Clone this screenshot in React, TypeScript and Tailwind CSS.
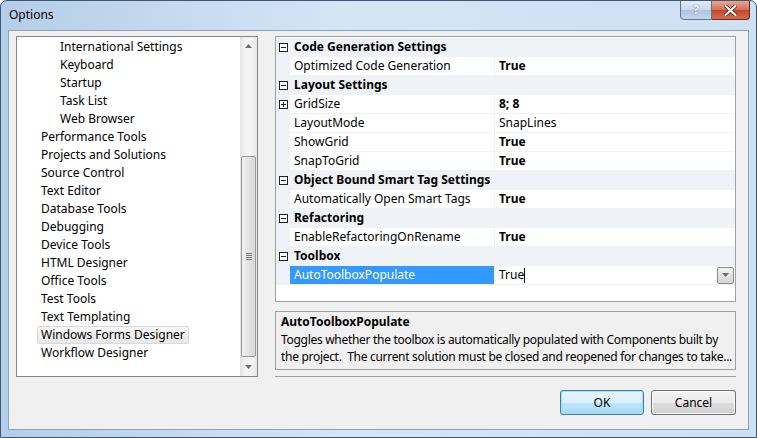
import React from "react";

const treeItems: { label: string; level: number; selected?: boolean }[] = [
  { label: "International Settings", level: 2 },
  { label: "Keyboard", level: 2 },
  { label: "Startup", level: 2 },
  { label: "Task List", level: 2 },
  { label: "Web Browser", level: 2 },
  { label: "Performance Tools", level: 1 },
  { label: "Projects and Solutions", level: 1 },
  { label: "Source Control", level: 1 },
  { label: "Text Editor", level: 1 },
  { label: "Database Tools", level: 1 },
  { label: "Debugging", level: 1 },
  { label: "Device Tools", level: 1 },
  { label: "HTML Designer", level: 1 },
  { label: "Office Tools", level: 1 },
  { label: "Test Tools", level: 1 },
  { label: "Text Templating", level: 1 },
  { label: "Windows Forms Designer", level: 1, selected: true },
  { label: "Workflow Designer", level: 1 },
];

type Row =
  | { kind: "cat"; label: string }
  | { kind: "prop"; name: string; value: string; bold?: boolean; plus?: boolean; selected?: boolean };

const rows: Row[] = [
  { kind: "cat", label: "Code Generation Settings" },
  { kind: "prop", name: "Optimized Code Generation", value: "True", bold: true },
  { kind: "cat", label: "Layout Settings" },
  { kind: "prop", name: "GridSize", value: "8; 8", bold: true, plus: true },
  { kind: "prop", name: "LayoutMode", value: "SnapLines" },
  { kind: "prop", name: "ShowGrid", value: "True", bold: true },
  { kind: "prop", name: "SnapToGrid", value: "True", bold: true },
  { kind: "cat", label: "Object Bound Smart Tag Settings" },
  { kind: "prop", name: "Automatically Open Smart Tags", value: "True", bold: true },
  { kind: "cat", label: "Refactoring" },
  { kind: "prop", name: "EnableRefactoringOnRename", value: "True", bold: true },
  { kind: "cat", label: "Toolbox" },
  { kind: "prop", name: "AutoToolboxPopulate", value: "True", selected: true },
];

function ExpandBox({ plus }: { plus?: boolean }) {
  return (
    <svg width="9" height="9" viewBox="0 0 9 9" className="block">
      <rect x="0.5" y="0.5" width="8" height="8" fill="#fff" stroke="#222" />
      <line x1="2" y1="4.5" x2="7" y2="4.5" stroke="#222" />
      {plus && <line x1="4.5" y1="2" x2="4.5" y2="7" stroke="#222" />}
    </svg>
  );
}

function Tri({ up }: { up?: boolean }) {
  return (
    <svg width="7" height="4" viewBox="0 0 7 4" className="block">
      {up ? <path d="M0 4 L3.5 0 L7 4 Z" fill="#6d6d6d" /> : <path d="M0 0 L7 0 L3.5 4 Z" fill="#6d6d6d" />}
    </svg>
  );
}

export default function App() {
  return (
    <div className="w-[757px] h-[438px] relative overflow-hidden font-['Noto_Sans',sans-serif] text-[12px] text-black bg-[linear-gradient(90deg,#b4cde8_0%,#d6e5f6_45%,#cfe0f3_100%)] rounded-t-[7px] border border-[#3d5877]">
      {/* title bar */}
      <div className="h-[29px] flex items-center pl-[8px] pb-[2px] relative">
        <span className="text-[12px] text-black">Options</span>
        <div className="absolute top-[-1px] right-[6px] flex">
          <div className="w-[32px] h-[20px] border border-[#5c7493] rounded-bl-[4px] bg-[linear-gradient(180deg,#e6eef8_0%,#c6d6ea_50%,#aec3de_51%,#c5d6ec_100%)] flex items-center justify-center text-[12px] font-bold text-[#f3f6fa] [text-shadow:0_0_1px_#3a5068]">
            ?
          </div>
          <div className="w-[38px] h-[20px] border border-l-0 border-[#6b2a22] rounded-br-[4px] bg-[linear-gradient(180deg,#e8a894_0%,#d27358_48%,#c2482d_52%,#d56a4b_100%)] flex items-center justify-center">
            <svg width="13" height="11" viewBox="0 0 13 11">
              <path d="M1.5 1 L11.5 10 M11.5 1 L1.5 10" stroke="#4a1a10" strokeWidth="3.6" strokeLinecap="round" />
              <path d="M1.5 1 L11.5 10 M11.5 1 L1.5 10" stroke="#fff" strokeWidth="2.2" strokeLinecap="round" />
            </svg>
          </div>
        </div>
      </div>

      {/* client area */}
      <div className="mx-[7px] h-[400px] bg-[#f0f0f0] border border-[#8ea3bd] flex flex-col">
        <div className="flex pt-[5px] pl-[7px]">
          {/* tree */}
          <div className="w-[242px] h-[341px] bg-white border border-[#828790] flex">
            <div className="flex-1 flex flex-col pt-[1px]">
              {treeItems.map((it) => (
                <div
                  key={it.label}
                  className={`h-[18px] flex items-center ${it.level === 2 ? "pl-[43px]" : "pl-[24px]"}`}
                >
                  <span
                    className={`leading-[16px] h-[18px] flex items-center ${
                      it.selected
                        ? "bg-[linear-gradient(180deg,#f7f7f7,#e8e8e8)] border border-[#d9d9d9] rounded-[2px] px-[3px] -ml-[4px]"
                        : ""
                    }`}
                  >
                    {it.label}
                  </span>
                </div>
              ))}
            </div>
            {/* scrollbar */}
            <div className="w-[17px] h-full bg-[linear-gradient(90deg,#e3e3e3,#f3f3f3_30%,#f3f3f3_70%,#e6e6e6)] flex flex-col">
              <div className="h-[17px] flex items-center justify-center">
                <Tri up />
              </div>
              <div className="h-[102px]" />
              <div className="h-[201px] mx-[1px] rounded-[2px] border border-[#9a9a9a] bg-[linear-gradient(90deg,#f2f2f2,#e4e4e4_50%,#d6d6d6)] flex items-center justify-center">
                <div className="flex flex-col gap-[1px]">
                  <div className="w-[6px] h-[1px] bg-[#7a7a7a]" />
                  <div className="w-[6px] h-[1px] bg-[#7a7a7a]" />
                  <div className="w-[6px] h-[1px] bg-[#7a7a7a]" />
                  <div className="w-[6px] h-[1px] bg-[#7a7a7a]" />
                </div>
              </div>
              <div className="flex-1 flex items-center justify-center">
                <Tri />
              </div>
            </div>
          </div>

          {/* right column */}
          <div className="ml-[17px] w-[461px] flex flex-col">
            <div className="h-[266px] bg-white border border-[#a0a0a0] pt-[1px] flex flex-col">
              {rows.map((r, i) =>
                r.kind === "cat" ? (
                  <div key={i} className="h-[19px] flex bg-[#eff2f7] border-b border-[#eff2f7]">
                    <div className="w-[14px] flex items-center justify-center pl-[1px]">
                      <ExpandBox />
                    </div>
                    <div className="pl-[4px] flex items-center font-bold">{r.label}</div>
                  </div>
                ) : (
                  <div key={i} className="h-[19px] flex border-b border-[#eff2f7]">
                    <div className="w-[14px] bg-[#eff2f7] flex items-center justify-center pl-[1px]">
                      {r.plus && <ExpandBox plus />}
                    </div>
                    <div
                      className={`w-[205px] flex items-center pl-[4px] border-r border-[#eff2f7] ${
                        r.selected ? "bg-[#3399ff] text-white" : ""
                      }`}
                    >
                      {r.name}
                    </div>
                    <div className={`flex-1 flex items-center pl-[4px] ${r.bold ? "font-bold" : ""}`}>
                      <span>{r.value}</span>
                      {r.selected && <span className="w-[1px] h-[15px] bg-black" />}
                      {r.selected && (
                        <div className="ml-auto mr-[1px] w-[17px] h-[17px] border border-[#8a8a8a] rounded-[2px] bg-[linear-gradient(180deg,#f4f4f4,#e2e2e2_50%,#d6d6d6)] flex items-center justify-center">
                          <Tri />
                        </div>
                      )}
                    </div>
                  </div>
                )
              )}
            </div>
            <div className="mt-[9px] h-[59px] border border-[#a0a0a0] bg-[#f0f0f0] px-[5px] tracking-[-0.3px]">
              <div className="font-bold leading-[19px] tracking-normal">AutoToolboxPopulate</div>
              <div className="whitespace-nowrap leading-[17px]">
                Toggles whether the toolbox is automatically populated with Components built by
              </div>
              <div className="whitespace-nowrap leading-[17px]">
                the project.&nbsp; The current solution must be closed and reopened for changes to take...
              </div>
            </div>
            <div className="mt-[6px] h-[1px] bg-[#a0a0a0]" />
          </div>
        </div>

        {/* buttons */}
        <div className="mt-[13px] flex justify-end gap-[7px] pr-[12px]">
          <div className="w-[84px] h-[25px] rounded-[3px] border border-[#3c7fb1] shadow-[inset_0_0_0_1px_#9fdcf9] bg-[linear-gradient(180deg,#eaf6fd_0%,#d9f0fc_50%,#bee6fd_51%,#a7d9f5_100%)] flex items-center justify-center">
            OK
          </div>
          <div className="w-[85px] h-[25px] rounded-[3px] border border-[#707070] shadow-[inset_0_0_0_1px_#fbfbfb] bg-[linear-gradient(180deg,#f2f2f2_0%,#ebebeb_50%,#dddddd_51%,#cfcfcf_100%)] flex items-center justify-center">
            Cancel
          </div>
        </div>
      </div>
    </div>
  );
}
